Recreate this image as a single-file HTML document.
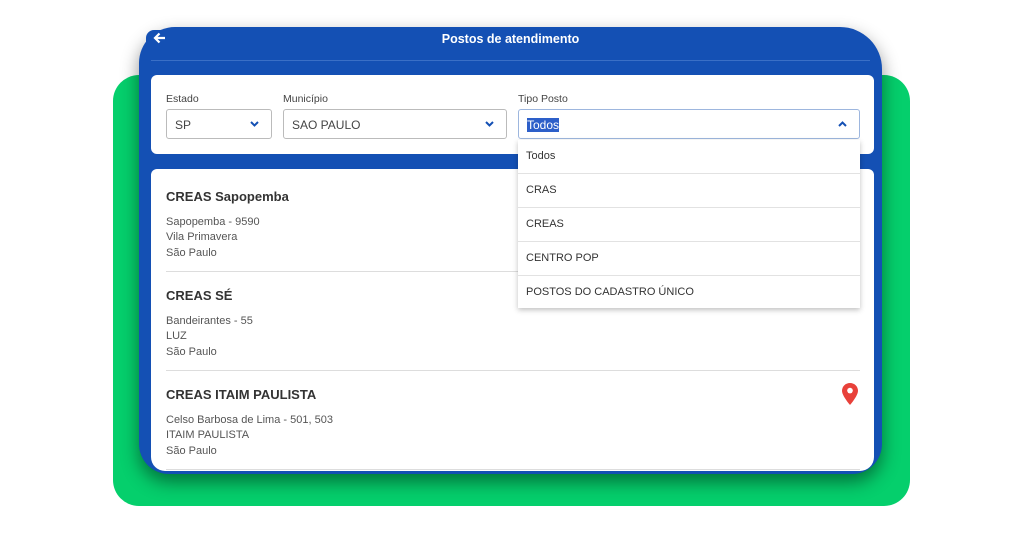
<!DOCTYPE html>
<html><head><meta charset="utf-8"><style>
*{box-sizing:border-box;margin:0;padding:0}
body{width:1024px;height:536px;background:#fff;position:relative;overflow:hidden;font-family:"Liberation Sans",sans-serif;color:#333}
.green{position:absolute;left:113px;top:75px;width:797px;height:431px;background:#05cf6c;border-radius:26px}
.dev{position:absolute;left:139px;top:27px;width:743px;height:447px;background:#1450b4;border-radius:36px 42px 30px 30px;box-shadow:0 8px 18px rgba(0,0,0,.45);overflow:hidden}
.title{position:absolute;left:0;right:0;top:5px;text-align:center;color:#fff;font-weight:bold;font-size:12.5px}
.hl{position:absolute;left:12px;right:12px;top:33px;height:1px;background:#3a6fc6}
.card{position:absolute;background:#fff;border-radius:6px}
.lbl{position:absolute;font-size:10.5px;color:#444}
.sel{position:absolute;height:30px;border:1px solid #bbb;border-radius:3px;font-size:12px;color:#444;padding:8px 8px}
.sel svg{position:absolute;right:12px;top:11px}
.dd{position:absolute;left:518px;top:140px;width:342px;height:168px;background:#fff;box-shadow:0 2px 5px rgba(0,0,0,.25)}
.dd div{height:34px;border-bottom:1px solid #e2e2e2;font-size:11px;padding:10px 8px 0;color:#333}
.item{position:absolute;left:166px;font-size:11px;color:#555;line-height:15.5px}
.item b{display:block;font-size:13px;color:#333;margin-bottom:10px}
.sep{position:absolute;left:166px;width:694px;height:1px;background:#ddd}
</style></head><body>
<div class="green"></div>
<div class="dev">
<div class="title">Postos de atendimento</div>
<div class="hl"></div>
</div>
<div style="position:absolute;left:146px;top:30px;width:24px;height:18px;background:#1450b4;border-radius:8px 0 0 0"></div>
<svg style="position:absolute;left:153px;top:32px" width="13" height="12" viewBox="0 0 13 12"><path d="M12 6H2M6.5 1.5L2 6l4.5 4.5" stroke="#fff" stroke-width="2.2" fill="none"/></svg>
<div class="card" style="left:151px;top:75px;width:723px;height:79px"></div>
<div class="card" style="left:151px;top:169px;width:723px;height:302px;border-radius:6px 6px 14px 14px"></div>
<div class="lbl" style="left:166px;top:93px">Estado</div>
<div class="lbl" style="left:283px;top:93px">Município</div>
<div class="lbl" style="left:518px;top:93px">Tipo Posto</div>
<div class="sel" style="left:166px;top:109px;width:106px">SP<svg width="9" height="6"><path d="M1 1l3.5 3.5L8 1" stroke="#1450b4" stroke-width="2" fill="none"/></svg></div>
<div class="sel" style="left:283px;top:109px;width:224px">SAO PAULO<svg width="9" height="6"><path d="M1 1l3.5 3.5L8 1" stroke="#1450b4" stroke-width="2" fill="none"/></svg></div>
<div class="sel" style="left:518px;top:109px;width:342px;border-color:#9db6de"><span style="background:#2d5fc9;color:#fff">Todos</span><svg width="9" height="6"><path d="M1 5l3.5-3.5L8 5" stroke="#1450b4" stroke-width="2" fill="none"/></svg></div>
<div class="item" style="top:189px"><b>CREAS Sapopemba</b>Sapopemba - 9590<br>Vila Primavera<br>São Paulo</div>
<div class="sep" style="top:271px"></div>
<div class="item" style="top:288px"><b>CREAS SÉ</b>Bandeirantes - 55<br>LUZ<br>São Paulo</div>
<div class="sep" style="top:370px"></div>
<div class="item" style="top:387px"><b>CREAS ITAIM PAULISTA</b>Celso Barbosa de Lima - 501, 503<br>ITAIM PAULISTA<br>São Paulo</div>
<div class="sep" style="top:469px"></div>
<svg style="position:absolute;left:842px;top:383px" width="16" height="22" viewBox="0 0 16 22"><path d="M8 0C3.6 0 0 3.4 0 7.8 0 13 8 22 8 22s8-9 8-14.2C16 3.4 12.4 0 8 0z" fill="#e8413a"/><circle cx="8" cy="7.6" r="2.8" fill="#fff"/></svg>
<div class="dd"><div>Todos</div><div>CRAS</div><div>CREAS</div><div>CENTRO POP</div><div style="border:none">POSTOS DO CADASTRO ÚNICO</div></div>
</body></html>
